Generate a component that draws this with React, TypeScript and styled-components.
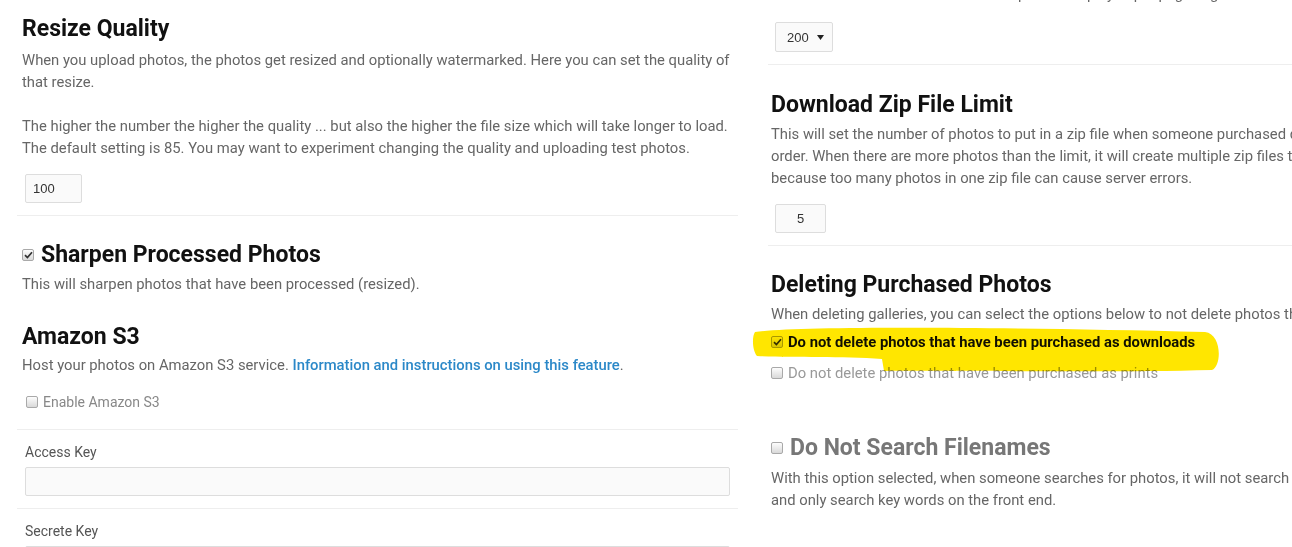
import React from "react";
import styled, { createGlobalStyle, css } from "styled-components";

const GlobalStyle = createGlobalStyle`
  html, body {
    margin: 0;
    padding: 0;
    background: #ffffff;
    overflow: hidden;
  }
  body {
    font-family: Roboto, "Noto Sans", Arial, sans-serif;
    -webkit-font-smoothing: antialiased;
  }
`;

const Page = styled.div`
  display: flex;
  align-items: flex-start;
  padding-left: 17px;
  width: 1520px;
`;

const Column = styled.div<{ $left?: boolean }>`
  flex: none;
  width: 721px;
  display: flex;
  flex-direction: column;
  ${(p) =>
    p.$left
      ? css`
          padding-top: 15px;
        `
      : css`
          margin-left: 30px;
        `}
`;

const Section = styled.section<{
  $pt?: number;
  $pb?: number;
  $px?: number;
  $mt?: number;
  $divider?: boolean;
}>`
  padding: ${(p) => p.$pt ?? 0}px ${(p) => p.$px ?? 5}px ${(p) => p.$pb ?? 0}px;
  margin-top: ${(p) => p.$mt ?? 0}px;
  border-bottom: ${(p) => (p.$divider ? "1px solid #eeeeee" : "none")};
  display: flex;
  flex-direction: column;
  align-items: flex-start;
`;

const Heading = styled.h2<{ $muted?: boolean; $mb?: number }>`
  margin: 0 0 ${(p) => p.$mb ?? 4}px;
  font-family: Roboto, "Noto Sans", Arial, sans-serif;
  font-size: 23px;
  line-height: 28px;
  font-weight: 700;
  color: ${(p) => (p.$muted ? "#777777" : "#111111")};
  display: flex;
  align-items: center;
  gap: 7px;
  white-space: nowrap;
`;

const Text = styled.p<{ $mt?: number }>`
  margin: ${(p) => p.$mt ?? 0}px 0 0;
  font-size: 14.8px;
  line-height: 22px;
  color: #666666;
  white-space: nowrap;
`;

const Link = styled.a`
  color: #2b88c8;
  font-weight: 500;
  text-decoration: none;
`;

const TextInput = styled.input<{ $w: number; $center?: boolean; $mt?: number; $ml?: number }>`
  box-sizing: border-box;
  display: block;
  width: ${(p) => p.$w}px;
  height: 29px;
  margin: ${(p) => p.$mt ?? 0}px 0 0 ${(p) => p.$ml ?? 0}px;
  padding: 0 7px;
  border: 1px solid #dddddd;
  border-radius: 2px;
  background: #fafafa;
  font-family: "Liberation Sans", Arial, sans-serif;
  font-size: 13px;
  color: #333333;
  text-align: ${(p) => (p.$center ? "center" : "left")};
  outline: none;
`;

const SelectBox = styled.div<{ $mt?: number; $ml?: number }>`
  box-sizing: border-box;
  width: 58px;
  height: 30px;
  margin: ${(p) => p.$mt ?? 0}px 0 0 ${(p) => p.$ml ?? 0}px;
  padding: 0 8px 0 11px;
  display: flex;
  align-items: center;
  justify-content: space-between;
  border: 1px solid #dddddd;
  border-radius: 2px;
  background: #fafafa;
  font-family: "Liberation Sans", Arial, sans-serif;
  font-size: 13px;
  color: #333333;
`;

const Box = styled.span`
  box-sizing: border-box;
  flex: none;
  width: 12px;
  height: 12px;
  border: 1px solid #a9a9a9;
  border-radius: 2px;
  background: linear-gradient(#fdfdfd, #d9d9d9);
  display: flex;
  align-items: center;
  justify-content: center;
`;

const CheckRow = styled.label<{ $strong?: boolean; $muted?: boolean; $size?: number; $ml?: number; $mt?: number }>`
  display: flex;
  align-items: center;
  gap: 5px;
  margin: ${(p) => p.$mt ?? 0}px 0 0 ${(p) => p.$ml ?? 0}px;
  font-size: ${(p) => p.$size ?? 14.8}px;
  line-height: 20px;
  font-weight: ${(p) => (p.$strong ? 700 : 400)};
  color: ${(p) => (p.$strong ? "#111111" : p.$muted ? "#999999" : "#888888")};
  white-space: nowrap;
  position: relative;
`;

const CheckList = styled.div`
  position: relative;
  margin-top: 7px;
  display: flex;
  flex-direction: column;
  gap: 11px;
`;

const Highlight = styled.svg`
  position: absolute;
  left: -21px;
  top: -12px;
  width: 475px;
  height: 60px;
  mix-blend-mode: multiply;
  pointer-events: none;
  z-index: 1;
`;

const FormGroup = styled.div`
  padding: 12px 8px;
  border-bottom: 1px solid #eeeeee;
`;

const FieldLabel = styled.div`
  font-size: 14px;
  line-height: 20px;
  color: #555555;
  margin-bottom: 5px;
`;

function Checkbox({ checked }: { checked?: boolean }) {
  return (
    <Box>
      {checked && (
        <svg width="9" height="8" viewBox="0 0 9 8">
          <path d="M1 4.2 L3.4 6.6 L8 1.2" fill="none" stroke="#333" strokeWidth="1.7" />
        </svg>
      )}
    </Box>
  );
}

export default function App() {
  return (
    <>
      <GlobalStyle />
      <Page>
        <Column $left>
          <Section $pb={12} $divider>
            <Heading $mb={6}>Resize Quality</Heading>
            <Text>
              When you upload photos, the photos get resized and optionally watermarked. Here you can set the quality of
              <br />
              that resize.
              <br />
              <br />
              The higher the number the higher the quality ... but also the higher the file size which will take longer to load.
              <br />
              The default setting is 85. You may want to experiment changing the quality and uploading test photos.
            </Text>
            <TextInput $w={57} $mt={15} $ml={3} defaultValue="100" />
          </Section>

          <Section $pt={25}>
            <Heading>
              <Checkbox checked />
              Sharpen Processed Photos
            </Heading>
            <Text>This will sharpen photos that have been processed (resized).</Text>
          </Section>

          <Section $mt={28} $pb={17} $divider>
            <Heading $mb={3}>Amazon S3</Heading>
            <Text>
              Host your photos on Amazon S3 service. <Link href="#">Information and instructions on using this feature</Link>.
            </Text>
            <CheckRow $size={14} $ml={4} $mt={16}>
              <Checkbox />
              Enable Amazon S3
            </CheckRow>
          </Section>

          <FormGroup>
            <FieldLabel>Access Key</FieldLabel>
            <TextInput $w={705} />
          </FormGroup>
          <FormGroup>
            <FieldLabel>Secrete Key</FieldLabel>
            <TextInput $w={705} />
          </FormGroup>
        </Column>

        <Column>
          <Section $px={3} $pb={12} $divider>
            <Text $mt={-17}>
              This will set the maximum number of photos displayed per page in galleries. Generally you may not want to go too high or it may
            </Text>
            <SelectBox $mt={17} $ml={4}>
              <span>200</span>
              <svg width="7" height="5" viewBox="0 0 7 5">
                <path d="M0 0 H7 L3.5 5 Z" fill="#222" />
              </svg>
            </SelectBox>
          </Section>

          <Section $px={3} $pt={26} $pb={12} $divider>
            <Heading>Download Zip File Limit</Heading>
            <Text>
              This will set the number of photos to put in a zip file when someone purchased downloads in an
              <br />
              order. When there are more photos than the limit, it will create multiple zip files to download. This is
              <br />
              because too many photos in one zip file can cause server errors.
            </Text>
            <TextInput $w={51} $mt={15} $ml={4} $center defaultValue="5" />
          </Section>

          <Section $px={3} $pt={25}>
            <Heading>Deleting Purchased Photos</Heading>
            <Text>When deleting galleries, you can select the options below to not delete photos that have been purchased.</Text>
            <CheckList>
              <Highlight viewBox="0 0 475 60">
                <path
                  d="M5 12 C50 6 250 7 455 12 C472 14 472 46 462 50 C350 53 200 50 134 51 L132 39 C90 36 40 38 7 36 C2 30 2 16 5 12 Z"
                  fill="#ffe600"
                />
              </Highlight>
              <CheckRow $strong>
                <Checkbox checked />
                Do not delete photos that have been purchased as downloads
              </CheckRow>
              <CheckRow $muted>
                <Checkbox />
                Do not delete photos that have been purchased as prints
              </CheckRow>
            </CheckList>
          </Section>

          <Section $px={3} $mt={51}>
            <Heading $muted $mb={5}>
              <Checkbox />
              Do Not Search Filenames
            </Heading>
            <Text>
              With this option selected, when someone searches for photos, it will not search the file names of the photos
              <br />
              and only search key words on the front end.
            </Text>
          </Section>
        </Column>
      </Page>
    </>
  );
}
